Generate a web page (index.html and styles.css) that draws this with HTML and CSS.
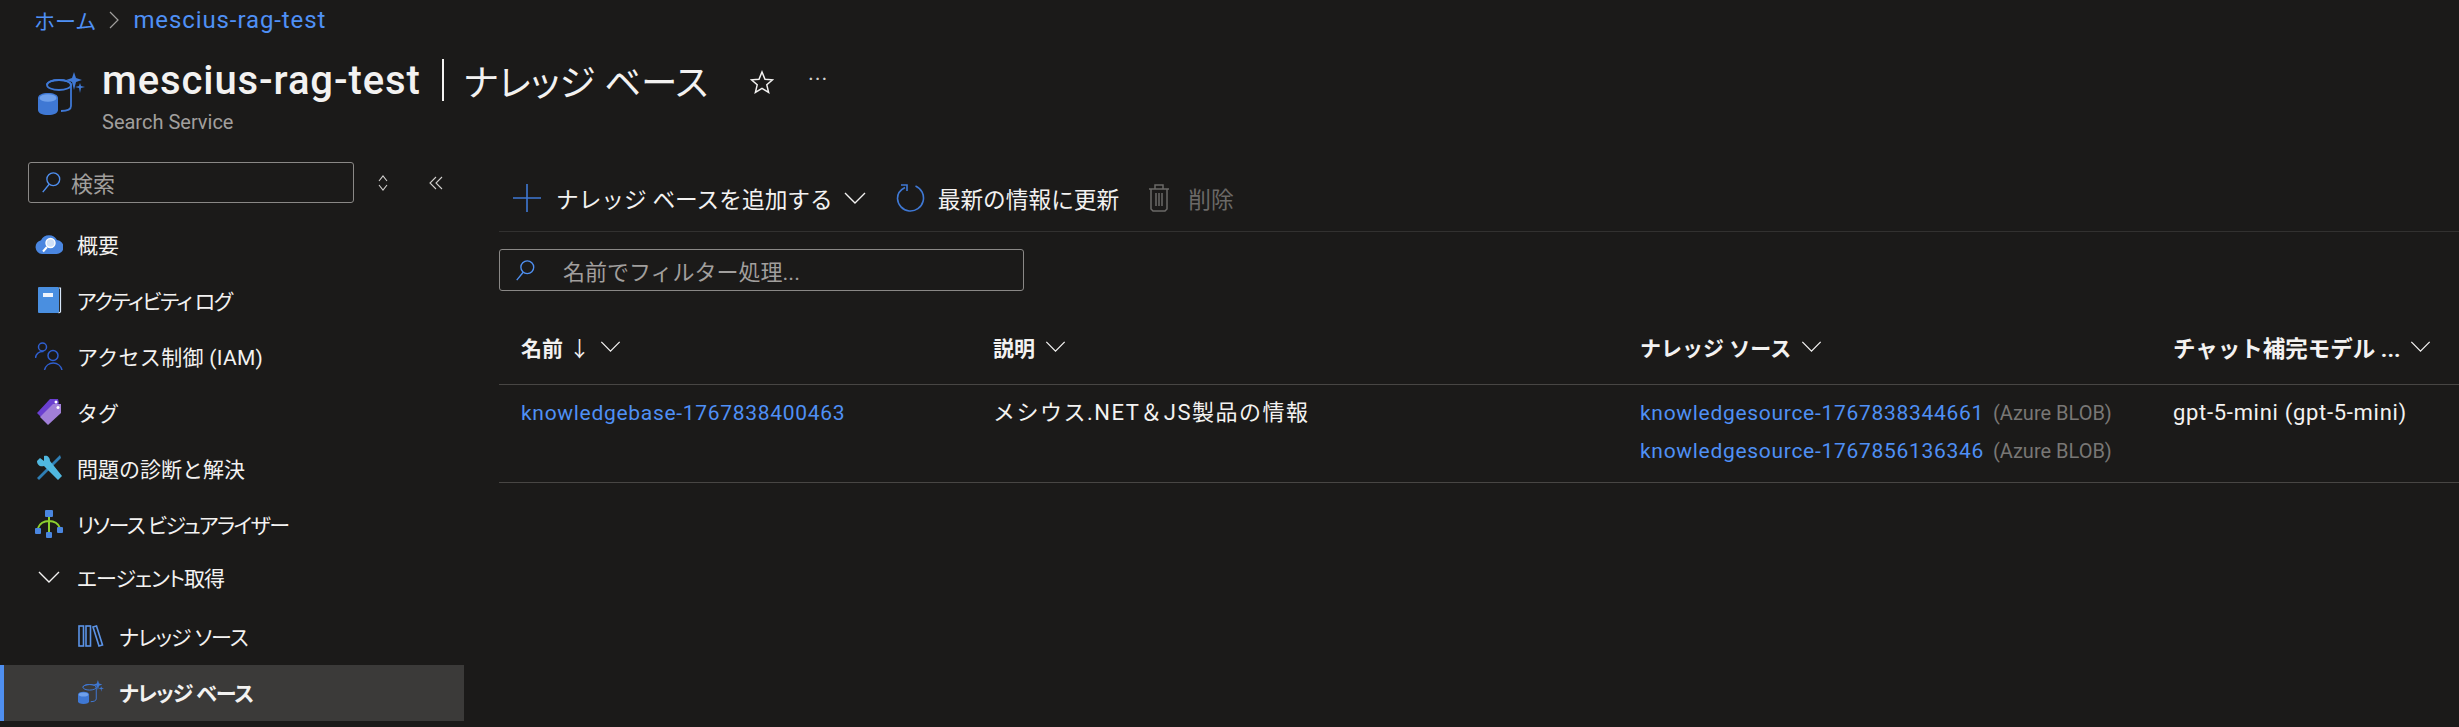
FILE: index.html
```html
<!DOCTYPE html>
<html lang="ja">
<head>
    <meta charset="UTF-8">
    <title>mescius-rag-test | ナレッジ ベース</title>
    <link rel="stylesheet" href="styles.css">
</head>
<body>
    <svg class="defs" width="0" height="0">
        <symbol id="kb-icon" viewBox="0 0 47 43">
            <path d="M9 13c0-3 5-5 12-5s12 2 12 5v21c0 3-4 5-10 5" fill="none" stroke="#3f78d4" stroke-width="1.8"/>
            <ellipse cx="21" cy="13" rx="12" ry="5" fill="none" stroke="#3f78d4" stroke-width="1.8"/>
            <path d="M0 26c0-3 4-5 10-5s10 2 10 5v12c0 3-4 5-10 5s-10-2-10-5z" fill="#3f78d4"/>
            <ellipse cx="10" cy="26" rx="8.500" ry="3.800" fill="#6fa0ea"/>
            <path d="M36 0l2 6 6 2-6 2-2 8-2-8-6-2 6-2z" fill="#3f78d4"/>
            <path d="M42 11l1 3 4 1-4 1-1 5-1-5-4-1 4-1z" fill="#3f78d4"/>
        </symbol>
        <symbol id="search-icon" viewBox="0 0 24 24">
            <circle cx="14.500" cy="9" r="7" fill="none" stroke="#4f8ff0" stroke-width="1.500"/>
            <path d="M10 14.500L3 23" fill="none" stroke="#4f8ff0" stroke-width="1.500"/>
        </symbol>
        <symbol id="chevron" viewBox="0 0 22 12">
            <path d="M1 1l10 10L21 1" fill="none" stroke="currentColor" stroke-width="1.400"/>
        </symbol>
    </svg>

    <nav class="breadcrumb">
        <a href="#">ホーム</a>
        <svg class="crumb-sep" viewBox="0 0 10 18"><path d="M1 1l8 8-8 8" fill="none" stroke="#a19f9d" stroke-width="1.200"/></svg>
        <a class="crumb-link" href="#">mescius-rag-test</a>
    </nav>

    <header class="page-head">
        <svg class="head-icon"><use href="#kb-icon"/></svg>
        <div class="head-text">
            <h1><b>mescius-rag-test</b><span class="pipe"></span><span class="blade">ナレッジ ベース</span></h1>
            <p>Search Service</p>
        </div>
        <svg class="star" viewBox="0 0 24 24"><path d="M12 2l3 7.200 7.600.6-5.800 5 1.800 7.600L12 18.300 5.400 22.400l1.800-7.600-5.800-5 7.600-.6z" fill="none" stroke="#f3f2f1" stroke-width="1.500"/></svg>
        <span class="more">···</span>
    </header>

    <div class="layout">
        <aside class="sidebar">
            <div class="side-search-row">
                <div class="side-search">
                    <svg class="search-glyph"><use href="#search-icon"/></svg>
                    <span>検索</span>
                </div>
                <svg class="updown" viewBox="0 0 10 16"><path d="M1 6l4-5 4 5M1 10l4 5 4-5" fill="none" stroke="#d2d0ce" stroke-width="1.100"/></svg>
                <svg class="collapse" viewBox="0 0 14 14"><path d="M7 1L1 7l6 6M13 1L7 7l6 6" fill="none" stroke="#d2d0ce" stroke-width="1.100"/></svg>
            </div>
            <ul class="menu">
                <li class="item">
                    <svg class="item-icon" viewBox="0 0 28 28">
                        <path d="M7 24a7 7 0 0 1-1-13.800A9 9 0 0 1 22 10a7 7 0 0 1-1 14z" fill="#4a86e0"/>
                        <circle cx="15.500" cy="13" r="4.500" fill="#cfe0f7" stroke="#fff" stroke-width="1.400"/>
                        <path d="M12 17l-4 4.500" stroke="#fff" stroke-width="2"/>
                    </svg>
                    概要
                </li>
                <li class="item kana">
                    <svg class="item-icon" viewBox="0 0 28 28">
                        <rect x="3" y="1" width="21" height="26" rx="1" fill="#4a8fe0"/>
                        <path d="M24 2h1.500v24l-2 1" fill="none" stroke="#d7e6f8" stroke-width="1.200"/>
                        <rect x="8" y="7" width="10" height="4" fill="#eef4fc"/>
                    </svg>
                    アクティビティ ログ
                </li>
                <li class="item iam">
                    <svg class="item-icon" viewBox="0 0 28 28">
                        <g fill="none" stroke="#2f5fd0" stroke-width="1.500">
                            <circle cx="7.500" cy="5" r="4"/>
                            <path d="M0.500 16a7 7 0 0 1 8-6.500"/>
                            <circle cx="18" cy="13.500" r="5"/>
                            <path d="M9.500 28a9 9 0 0 1 17.500 0"/>
                        </g>
                    </svg>
                    アクセス制御 (IAM)
                </li>
                <li class="item">
                    <svg class="item-icon" viewBox="0 0 28 28">
                        <path d="M2 15L15 1h8l1 4L8 21z" fill="#6a3fd0"/>
                        <path d="M5 19L18 6h8v9L13 27z" fill="#a17fd8"/>
                        <circle cx="21" cy="4" r="1.500" fill="#fff"/>
                        <circle cx="23" cy="9.500" r="1.500" fill="#fff"/>
                    </svg>
                    タグ
                </li>
                <li class="item">
                    <svg class="item-icon" viewBox="0 0 28 28">
                        <path d="M25 1L2 24l2 2L26 4z" fill="#2f7fb5"/>
                        <path d="M2 7l3-3 4 3V2c3-1 6 1 6 5l12 15-4 4L9 12c-4 1-7-1-7-5z" fill="#50b8e0"/>
                    </svg>
                    問題の診断と解決
                </li>
                <li class="item kana">
                    <svg class="item-icon" viewBox="0 0 28 28">
                        <path d="M14 7v15M3 18c2-5 7-7 11-7s9 2 11 7" fill="none" stroke="#8ccf2f" stroke-width="2"/>
                        <rect x="10" y="0" width="8" height="7" rx="1" fill="#4a86e0"/>
                        <rect x="0" y="18" width="6" height="6" rx="1" fill="#4a86e0"/>
                        <rect x="22" y="17" width="6" height="6" rx="1" fill="#4a86e0"/>
                        <rect x="11" y="22" width="6" height="6" rx="1" fill="#4a86e0"/>
                    </svg>
                    リソース ビジュアライザー
                </li>
                <li class="item group kana">
                    <svg class="group-chevron"><use href="#chevron"/></svg>
                    エージェント取得
                </li>
                <li class="item sub kana">
                    <svg class="sub-icon" viewBox="0 0 26 22">
                        <g fill="none" stroke="#5b93e6" stroke-width="1.600">
                            <rect x="1" y="1" width="4.500" height="20"/>
                            <rect x="8" y="1" width="4.500" height="20"/>
                            <path d="M15 2l3.500-1 6 19-3.500 1z"/>
                        </g>
                    </svg>
                    ナレッジ ソース
                </li>
                <li class="item sub kana active">
                    <svg class="sub-icon"><use href="#kb-icon"/></svg>
                    ナレッジ ベース
                </li>
            </ul>
        </aside>

        <main class="content">
            <div class="toolbar">
                <button class="tool add">
                    <svg class="plus" viewBox="0 0 28 28"><path d="M14 0v28M0 14h28" stroke="#3f78d4" stroke-width="1.600"/></svg>
                    ナレッジ ベースを追加する
                    <svg class="tool-chevron"><use href="#chevron"/></svg>
                </button>
                <button class="tool refresh">
                    <svg class="refresh-icon" viewBox="0 0 30 28"><path d="M9 3.500C4 6 1.500 10 1.500 14.500a13 13 0 1 0 18-12.500" fill="none" stroke="#3f78d4" stroke-width="1.600"/><path d="M5 1h6v6" fill="none" stroke="#3f78d4" stroke-width="1.600"/></svg>
                    最新の情報に更新
                </button>
                <button class="tool disabled">
                    <svg class="trash" viewBox="0 0 22 28"><path d="M1 5h20M7 5V1h8v4M3 5v20l2 2h12l2-2V5M8 9v13M11 9v13M14 9v13" fill="none" stroke="#6b6967" stroke-width="1.500"/></svg>
                    削除
                </button>
            </div>

            <div class="filter">
                <svg class="search-glyph"><use href="#search-icon"/></svg>
                <span>名前でフィルター処理...</span>
            </div>

            <div class="grid head-row">
                <div class="th">名前 <span class="arrow">↓</span><svg class="th-chevron"><use href="#chevron"/></svg></div>
                <div class="th">説明<svg class="th-chevron"><use href="#chevron"/></svg></div>
                <div class="th">ナレッジ ソース<svg class="th-chevron"><use href="#chevron"/></svg></div>
                <div class="th wide">チャット補完モデル ...<svg class="th-chevron"><use href="#chevron"/></svg></div>
            </div>
            <div class="grid body-row">
                <div class="td"><a href="#">knowledgebase-1767838400463</a></div>
                <div class="td desc">メシウス.NET＆JS製品の情報</div>
                <div class="td">
                    <div><a href="#">knowledgesource-1767838344661</a> <span class="muted">(Azure BLOB)</span></div>
                    <div><a href="#">knowledgesource-1767856136346</a> <span class="muted">(Azure BLOB)</span></div>
                </div>
                <div class="td model">gpt-5-mini (gpt-5-mini)</div>
            </div>
        </main>
    </div>
</body>
</html>
```

FILE: styles.css
```css
* {
    box-sizing: border-box;
}
html, body {
    height: 100%;
}
body {
    margin: 0;
    overflow: hidden;
    background-color: #1b1a19;
    color: #f3f2f1;
    font-family: "Roboto", "Noto Sans CJK JP", sans-serif;
    font-size: 21px;
}
a {
    color: #4f90f5;
    text-decoration: none;
}
.defs {
    position: absolute;
}

/* top of the page */
.breadcrumb {
    display: flex;
    align-items: center;
    height: 40px;
    padding-left: 34px;
    font-size: 21px;
}
.crumb-sep {
    width: 10px;
    height: 18px;
    margin: 0 14px 0 13px;
}
.crumb-link {
    font-size: 24px;
    letter-spacing: 0.900px;
}
.page-head {
    display: flex;
    align-items: flex-start;
    height: 110px;
    padding-left: 38px;
}
.head-icon {
    width: 47px;
    height: 43px;
    margin-top: 32px;
}
.head-text {
    width: 648px;
    margin-left: 17px;
}
.head-text h1 {
    display: flex;
    align-items: center;
    height: 56px;
    margin: 12px 0 0;
    font-size: 40px;
    font-weight: 400;
    white-space: nowrap;
}
.head-text h1 b {
    font-weight: 500;
    letter-spacing: 0.900px;
}
.pipe {
    width: 2px;
    height: 42px;
    margin: 0 20px 0 21px;
    background-color: #f3f2f1;
}
.blade {
    font-size: 36.500px;
    font-feature-settings: "palt";
}
.head-text p {
    margin: 0;
    font-size: 20px;
    line-height: 28px;
    color: #a19f9d;
}
.star {
    width: 24px;
    height: 24px;
    margin-top: 30px;
}
.more {
    margin: 25px 0 0 34px;
    font-size: 22px;
    line-height: 30px;
    letter-spacing: 1px;
    color: #d2d0ce;
}

.layout {
    display: flex;
}

/* left menu */
.sidebar {
    width: 464px;
    margin-right: 35px;
    flex-shrink: 0;
}
.side-search-row {
    display: flex;
    align-items: center;
    margin: 12px 0 14px 28px;
}
.side-search {
    display: flex;
    align-items: center;
    width: 326px;
    height: 41px;
    padding-left: 11px;
    padding-bottom: 2px;
    border: 1px solid #8a8886;
    border-radius: 3px;
    font-size: 22px;
    color: #a19f9d;
}
.side-search span {
    margin-left: 9px;
}
.search-glyph {
    width: 22px;
    height: 24px;
}
.updown {
    width: 10px;
    height: 16px;
    margin-left: 24px;
}
.collapse {
    width: 14px;
    height: 14px;
    margin-left: 41px;
}
.menu {
    margin: 0;
    padding: 0;
    list-style: none;
}
.item {
    display: flex;
    align-items: center;
    height: 56px;
    padding-left: 35px;
    padding-bottom: 2px;
    white-space: nowrap;
}
.kana {
    font-feature-settings: "palt";
    letter-spacing: -1.500px;
}
.iam {
    letter-spacing: 0.300px;
}
.item-icon {
    width: 28px;
    height: 28px;
    margin-right: 14px;
}
.group {
    padding-bottom: 8px;
    letter-spacing: -1px;
}
.group-chevron {
    width: 22px;
    height: 12px;
    margin: 0 17px 0 3px;
}
.sub {
    padding-left: 78px;
    letter-spacing: -1px;
}
.sub-icon {
    width: 26px;
    height: 24px;
    margin-right: 15px;
}
.active {
    border-left: 4px solid #4f8ff0;
    padding-left: 74px;
    background-color: #3b3a39;
    font-weight: 700;
}

/* right side */
.content {
    flex: 1;
    padding-top: 20px;
}
.toolbar {
    display: flex;
    align-items: center;
    height: 62px;
    padding-bottom: 5px;
    border-bottom: 1px solid #323130;
}
.tool {
    display: flex;
    align-items: center;
    padding: 0;
    border: 0;
    background: none;
    color: inherit;
    font: inherit;
    font-size: 22.700px;
    white-space: nowrap;
}
.add {
    margin-left: 14px;
}
.plus {
    width: 28px;
    height: 28px;
    margin-right: 15px;
}
.tool-chevron {
    width: 22px;
    height: 12px;
    margin-left: 11px;
}
.refresh {
    margin-left: 30px;
}
.refresh-icon {
    width: 30px;
    height: 28px;
    margin-right: 12px;
}
.disabled {
    margin-left: 29px;
    color: #6b6967;
}
.trash {
    width: 22px;
    height: 28px;
    margin-right: 18px;
}
.filter {
    display: flex;
    align-items: center;
    width: 525px;
    height: 42px;
    margin-top: 17px;
    padding-left: 14px;
    border: 1px solid #8a8886;
    border-radius: 3px;
    font-size: 22px;
    color: #a19f9d;
}
.filter span {
    margin-left: 27px;
}
.grid {
    display: grid;
    grid-template-columns: 472px 647px 533px 1fr;
}
.head-row {
    height: 76px;
    margin-top: 18px;
    border-bottom: 1px solid #484644;
    align-items: center;
}
.th {
    display: flex;
    align-items: center;
    padding-left: 22px;
    font-weight: 700;
    white-space: nowrap;
}
.wide {
    font-size: 22.500px;
}
.arrow {
    margin-left: 6px;
    font-weight: 400;
}
.th-chevron {
    width: 21px;
    height: 11px;
    margin-left: 10px;
}
.body-row {
    height: 98px;
    padding-top: 9px;
    border-bottom: 1px solid #484644;
}
.td {
    padding-left: 22px;
    line-height: 38px;
    letter-spacing: 0.700px;
    white-space: nowrap;
}
.desc {
    font-size: 22px;
    letter-spacing: 1.500px;
}
.model {
    font-size: 22px;
}
.muted {
    margin-left: 3px;
    font-size: 20px;
    letter-spacing: 0;
    color: #797775;
}
```
